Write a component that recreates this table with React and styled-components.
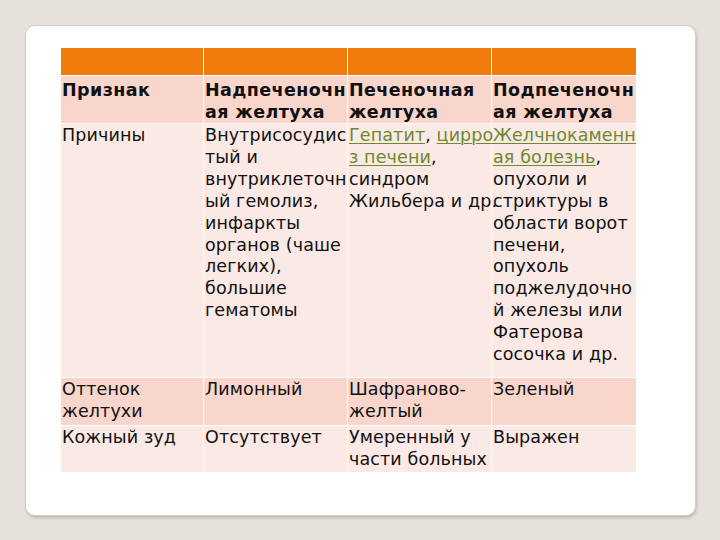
import React from "react";
import styled, { createGlobalStyle } from "styled-components";

const GlobalStyle = createGlobalStyle`
  html, body {
    margin: 0;
    padding: 0;
    background: #e6e2db;
  }
  body {
    width: 720px;
    height: 540px;
    overflow: hidden;
  }
`;

const Page = styled.div`
  width: 720px;
  height: 540px;
  padding: 25px 24px 24px 25px;
  box-sizing: border-box;
`;

const Card = styled.div`
  height: 100%;
  background: #ffffff;
  border: 1px solid #cfcfcf;
  border-radius: 10px;
  box-shadow: 1px 2px 3px rgba(0, 0, 0, 0.18);
  box-sizing: border-box;
  padding: 22px 0 0 35px;
`;

const Table = styled.div`
  display: grid;
  width: 576px;
  grid-template-columns: 142px 143px 143px 144px;
  grid-template-rows: 27px 47px 253px 47px 46px;
  column-gap: 1px;
  row-gap: 1px;
  background: #ffffff;
`;

const Cell = styled.div`
  background: ${(p) => p.$bg};
  padding: ${(p) => (p.$bold ? "4px 0 0 1px" : "1px 0 0 1px")};
  font-family: "DejaVu Sans", Verdana, sans-serif;
  font-size: 17.5px;
  line-height: 21.9px;
  letter-spacing: ${(p) => (p.$bold ? "0.4px" : "0.12px")};
  color: #111111;
  white-space: nowrap;
  font-weight: ${(p) => (p.$bold ? 700 : 400)};
  position: relative;
  z-index: ${(p) => p.$z || 0};
`;

const Link = styled.span`
  color: #6b8a2e;
  text-decoration: underline;
  text-decoration-thickness: 1px;
  text-underline-offset: 2px;
`;

const ORANGE = "#f07c0c";
const PINK = "#f8d6cc";
const LIGHT = "#fbe9e5";

const Lines = ({ lines }) =>
  lines.map((l, i) => (
    <React.Fragment key={i}>
      {l}
      {i < lines.length - 1 && <br />}
    </React.Fragment>
  ));

export default function App() {
  return (
    <>
      <GlobalStyle />
      <Page>
        <Card>
          <Table>
            <Cell $bg={ORANGE} />
            <Cell $bg={ORANGE} />
            <Cell $bg={ORANGE} />
            <Cell $bg={ORANGE} />

            <Cell $bg={PINK} $bold>
              Признак
            </Cell>
            <Cell $bg={PINK} $bold>
              <Lines lines={["Надпеченочн", "ая желтуха"]} />
            </Cell>
            <Cell $bg={PINK} $bold>
              <Lines lines={["Печеночная", "желтуха"]} />
            </Cell>
            <Cell $bg={PINK} $bold>
              <Lines lines={["Подпеченочн", "ая желтуха"]} />
            </Cell>

            <Cell $bg={LIGHT}>Причины</Cell>
            <Cell $bg={LIGHT}>
              <Lines
                lines={[
                  "Внутрисосудис",
                  "тый и",
                  "внутриклеточн",
                  "ый гемолиз,",
                  "инфаркты",
                  "органов (чаше",
                  "легких),",
                  "большие",
                  "гематомы",
                ]}
              />
            </Cell>
            <Cell $bg={LIGHT} $z={2}>
              <Lines
                lines={[
                  <>
                    <Link>Гепатит</Link>, <Link>цирро</Link>
                  </>,
                  <>
                    <Link>з печени</Link>,
                  </>,
                  "синдром",
                  "Жильбера и др.",
                ]}
              />
            </Cell>
            <Cell $bg={LIGHT}>
              <Lines
                lines={[
                  <Link key="a">Желчнокаменн</Link>,
                  <>
                    <Link>ая болезнь</Link>,
                  </>,
                  "опухоли и",
                  "стриктуры в",
                  "области ворот",
                  "печени,",
                  "опухоль",
                  "поджелудочно",
                  "й железы или",
                  "Фатерова",
                  "сосочка и др.",
                ]}
              />
            </Cell>

            <Cell $bg={PINK}>
              <Lines lines={["Оттенок", "желтухи"]} />
            </Cell>
            <Cell $bg={PINK}>Лимонный</Cell>
            <Cell $bg={PINK}>
              <Lines lines={["Шафраново-", "желтый"]} />
            </Cell>
            <Cell $bg={PINK}>Зеленый</Cell>

            <Cell $bg={LIGHT}>Кожный зуд</Cell>
            <Cell $bg={LIGHT}>Отсутствует</Cell>
            <Cell $bg={LIGHT}>
              <Lines lines={["Умеренный у", "части больных"]} />
            </Cell>
            <Cell $bg={LIGHT}>Выражен</Cell>
          </Table>
        </Card>
      </Page>
    </>
  );
}
